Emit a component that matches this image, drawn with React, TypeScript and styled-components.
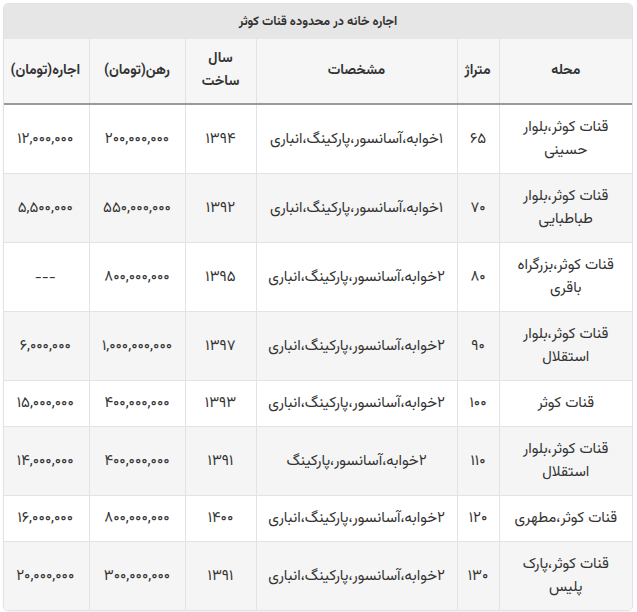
import React from "react";
import styled, { createGlobalStyle } from "styled-components";

const Global = createGlobalStyle`
  html, body { margin: 0; padding: 0; background: #ffffff; }
  body { font-family: "Vazirmatn", "Noto Sans Arabic", "Noto Naskh Arabic", "DejaVu Sans", sans-serif; color: #333333; }
`;

const Page = styled.div`
  padding: 3px 4px 4px 3px;
`;

const Card = styled.div`
  direction: rtl;
  border: 1px solid #e2e2e2;
  border-radius: 5px;
  overflow: hidden;
  box-shadow: 0 1px 2px rgba(0, 0, 0, 0.06);
`;

const Caption = styled.div`
  background: #e6e6e6;
  height: 35px;
  display: flex;
  align-items: center;
  justify-content: center;
  font-size: 12.5px;
  font-weight: 700;
  color: #333;
`;

const Table = styled.table`
  width: 100%;
  border-collapse: collapse;
  table-layout: fixed;
  font-size: 15px;
  line-height: 23px;
`;

const HeadCell = styled.th`
  background: #f6f6f6;
  font-weight: 700;
  font-size: 14px;
  padding: 9px 8px;
  text-align: center;
  border-left: 1px solid #e3e3e3;
  border-bottom: 2px solid #9a9a9a;
  &:last-child { border-left: none; }
`;

const Row = styled.tr<{ $alt: boolean }>`
  background: ${(p) => (p.$alt ? "#f5f5f5" : "#ffffff")};
`;

const Cell = styled.td`
  padding: 11px 8px;
  text-align: center;
  border-left: 1px solid #e3e3e3;
  border-bottom: 1px solid #e3e3e3;
  &:last-child { border-left: none; }
  tr:last-child > & { border-bottom: none; }
`;

const widths = [133, 42, 201, 71, 96, 87];
const heads = ["محله", "متراژ", "مشخصات", "سال ساخت", "رهن(تومان)", "اجاره(تومان)"];

const f2 = "۲خوابه،آسانسور،پارکینگ،انباری";
const f1 = "۱خوابه،آسانسور،پارکینگ،انباری";

const rows: string[][] = [
  ["قنات کوثر،بلوار حسینی", "۶۵", f1, "۱۳۹۴", "۲۰۰,۰۰۰,۰۰۰", "۱۲,۰۰۰,۰۰۰"],
  ["قنات کوثر،بلوار طباطبایی", "۷۰", f1, "۱۳۹۲", "۵۵۰,۰۰۰,۰۰۰", "۵,۵۰۰,۰۰۰"],
  ["قنات کوثر،بزرگراه باقری", "۸۰", f2, "۱۳۹۵", "۸۰۰,۰۰۰,۰۰۰", "---"],
  ["قنات کوثر،بلوار استقلال", "۹۰", f2, "۱۳۹۷", "۱,۰۰۰,۰۰۰,۰۰۰", "۶,۰۰۰,۰۰۰"],
  ["قنات کوثر", "۱۰۰", f2, "۱۳۹۳", "۴۰۰,۰۰۰,۰۰۰", "۱۵,۰۰۰,۰۰۰"],
  ["قنات کوثر،بلوار استقلال", "۱۱۰", "۲خوابه،آسانسور،پارکینگ", "۱۳۹۱", "۴۰۰,۰۰۰,۰۰۰", "۱۴,۰۰۰,۰۰۰"],
  ["قنات کوثر،مطهری", "۱۲۰", f2, "۱۴۰۰", "۸۰۰,۰۰۰,۰۰۰", "۱۶,۰۰۰,۰۰۰"],
  ["قنات کوثر،پارک پلیس", "۱۳۰", f2, "۱۳۹۱", "۳۰۰,۰۰۰,۰۰۰", "۲۰,۰۰۰,۰۰۰"],
];

export default function App() {
  return (
    <>
      <Global />
      <Page>
        <Card>
          <Caption>اجاره خانه در محدوده قنات کوثر</Caption>
          <Table>
            <colgroup>
              {widths.map((w, i) => (
                <col key={i} style={{ width: w }} />
              ))}
            </colgroup>
            <thead>
              <tr>
                {heads.map((h) => (
                  <HeadCell key={h}>{h}</HeadCell>
                ))}
              </tr>
            </thead>
            <tbody>
              {rows.map((r, i) => (
                <Row key={i} $alt={i % 2 === 1}>
                  {r.map((c, j) => (
                    <Cell key={j}>{c}</Cell>
                  ))}
                </Row>
              ))}
            </tbody>
          </Table>
        </Card>
      </Page>
    </>
  );
}
